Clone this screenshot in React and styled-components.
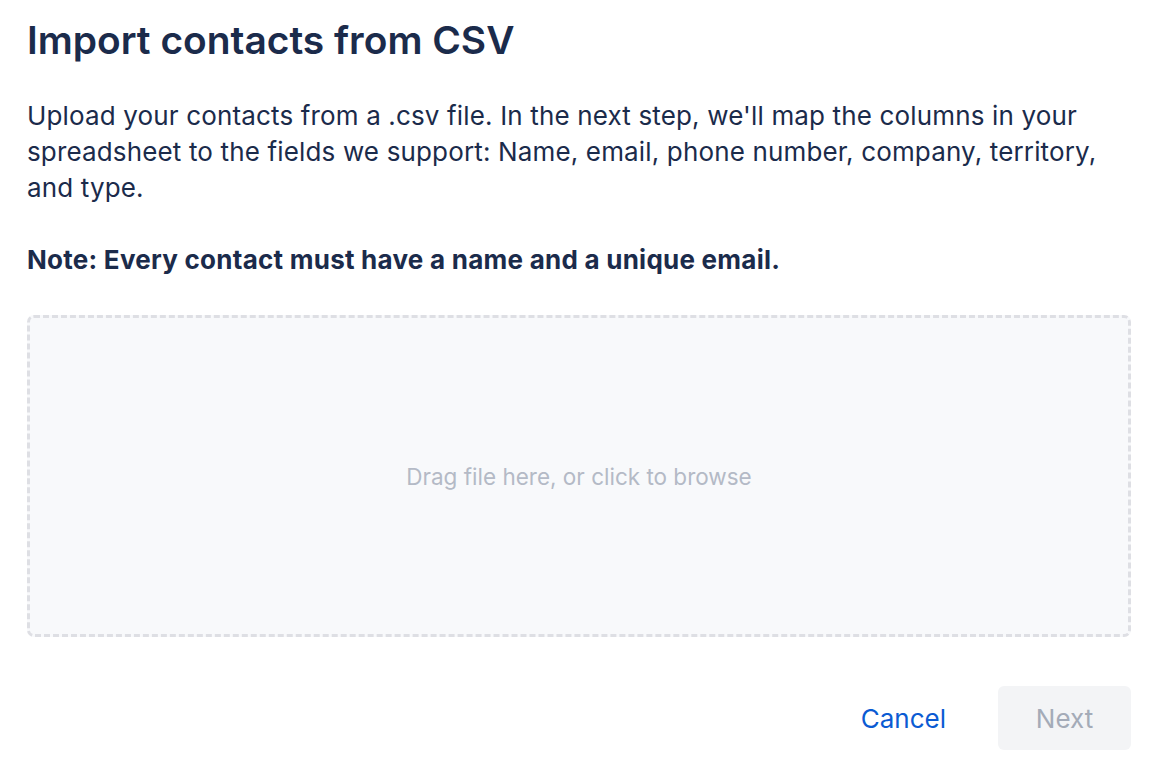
import styled, { createGlobalStyle } from "styled-components";

const GlobalStyle = createGlobalStyle`
  body {
    margin: 0;
    background: #ffffff;
    font-family: "Inter", "Liberation Sans", sans-serif;
    color: #1b2b4b;
  }
`;

const Page = styled.div`
  padding: 14px 27px 22px 27px;
  display: flex;
  flex-direction: column;
`;

const Title = styled.h1`
  margin: 0;
  font-size: 38.9px;
  line-height: 52px;
  font-weight: 600;
  color: #1b2b4b;
`;

const Text = styled.p`
  margin: ${(p) => p.$top || 0}px 0 0 0;
  font-size: 26px;
  line-height: 36px;
  letter-spacing: ${(p) => (p.$bold ? 0.25 : 0.15)}px;
  font-weight: ${(p) => (p.$bold ? 700 : 400)};
`;

const DropZone = styled.div`
  margin-top: 37px;
  height: 316px;
  border: 3px dashed #dedfe4;
  border-radius: 7px;
  background: #f8f9fb;
  display: flex;
  align-items: center;
  justify-content: center;
  cursor: pointer;
  font-size: 22.5px;
  color: #b4bac6;
`;

const Footer = styled.div`
  margin-top: 49px;
  display: flex;
  justify-content: flex-end;
  align-items: center;
  gap: 52px;
`;

const LinkButton = styled.button`
  background: none;
  border: none;
  padding: 0;
  font-family: inherit;
  font-size: 26px;
  color: #0b5bd3;
  cursor: pointer;
`;

const NextButton = styled.button`
  width: 133px;
  height: 64px;
  border: none;
  border-radius: 6px;
  background: #f3f4f6;
  color: #a4abb8;
  font-family: inherit;
  font-size: 26px;
`;

export default function App() {
  return (
    <>
      <GlobalStyle />
      <Page>
        <Title>Import contacts from CSV</Title>
        <Text $top={32}>
          Upload your contacts from a .csv file. In the next step, we'll map the columns in your
          spreadsheet to the fields we support: Name, email, phone number, company, territory,
          and type.
        </Text>
        <Text $top={36} $bold>
          Note: Every contact must have a name and a unique email.
        </Text>
        <DropZone>Drag file here, or click to browse</DropZone>
        <Footer>
          <LinkButton>Cancel</LinkButton>
          <NextButton disabled>Next</NextButton>
        </Footer>
      </Page>
    </>
  );
}
